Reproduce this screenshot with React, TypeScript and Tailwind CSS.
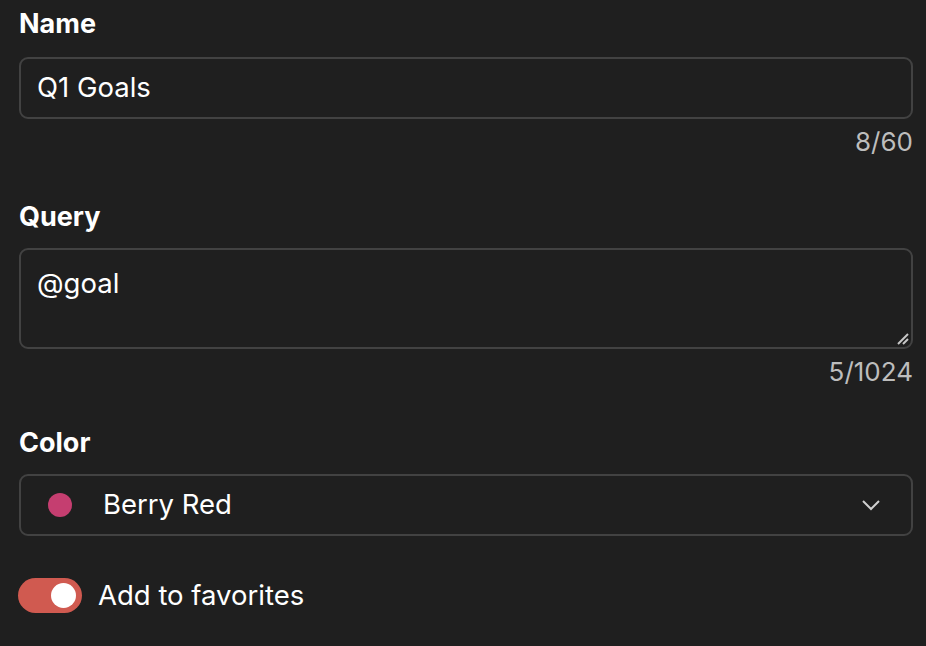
import React from "react";

export default function App() {
  return (
    <div
      className="w-[926px] h-[646px] bg-[#1f1f1f] text-white overflow-hidden pl-[19px] pr-[13px] pt-2"
      style={{ fontFamily: "Inter, 'Noto Sans', sans-serif" }}
    >
      <div className="flex flex-col">
        <label className="text-[27px] leading-[32px] font-bold">Name</label>
        <div className="mt-[17px] h-[62px] rounded-[9px] border-2 border-[#424242] flex items-center px-[16px] text-[27.5px]">
          Q1 Goals
        </div>
        <div className="mt-[7px] text-right text-[26px] leading-[32px] text-[#bdbdbd]">8/60</div>

        <label className="mt-[43px] text-[27px] leading-[32px] font-bold">Query</label>
        <div className="relative mt-[15px] h-[101px] rounded-[9px] border-2 border-[#424242] px-[16px] pt-[16px] text-[27.5px] leading-[34px]">
          @goal
          <svg className="absolute right-[2px] bottom-[2px]" width="14" height="14" viewBox="0 0 14 14">
            <line x1="3" y1="13" x2="13" y2="3" stroke="#c8c8c8" strokeWidth="2" />
            <line x1="8" y1="13" x2="13" y2="8" stroke="#c8c8c8" strokeWidth="2" />
          </svg>
        </div>
        <div className="mt-[7px] text-right text-[26px] leading-[32px] text-[#bdbdbd]">5/1024</div>

        <label className="mt-[39px] text-[27px] leading-[32px] font-bold">Color</label>
        <div className="mt-[15px] h-[62px] rounded-[9px] border-2 border-[#424242] flex items-center pl-[27px] pr-[30px] text-[27.5px]">
          <span className="w-[24px] h-[24px] rounded-full bg-[#c53e70] shrink-0" />
          <span className="ml-[31px] flex-1">Berry Red</span>
          <svg width="20" height="12" viewBox="0 0 20 12" className="shrink-0">
            <polyline points="2,2 10,10 18,2" fill="none" stroke="#d0d0d0" strokeWidth="2" />
          </svg>
        </div>

        <div className="mt-[39px] -ml-px flex items-center">
          <div className="w-[64px] h-[35px] rounded-full bg-[#d05a50] flex items-center justify-end pr-[6px] shrink-0">
            <span className="w-[25px] h-[25px] rounded-full bg-white" />
          </div>
          <span className="ml-[16px] text-[27.5px]">Add to favorites</span>
        </div>
      </div>
    </div>
  );
}
